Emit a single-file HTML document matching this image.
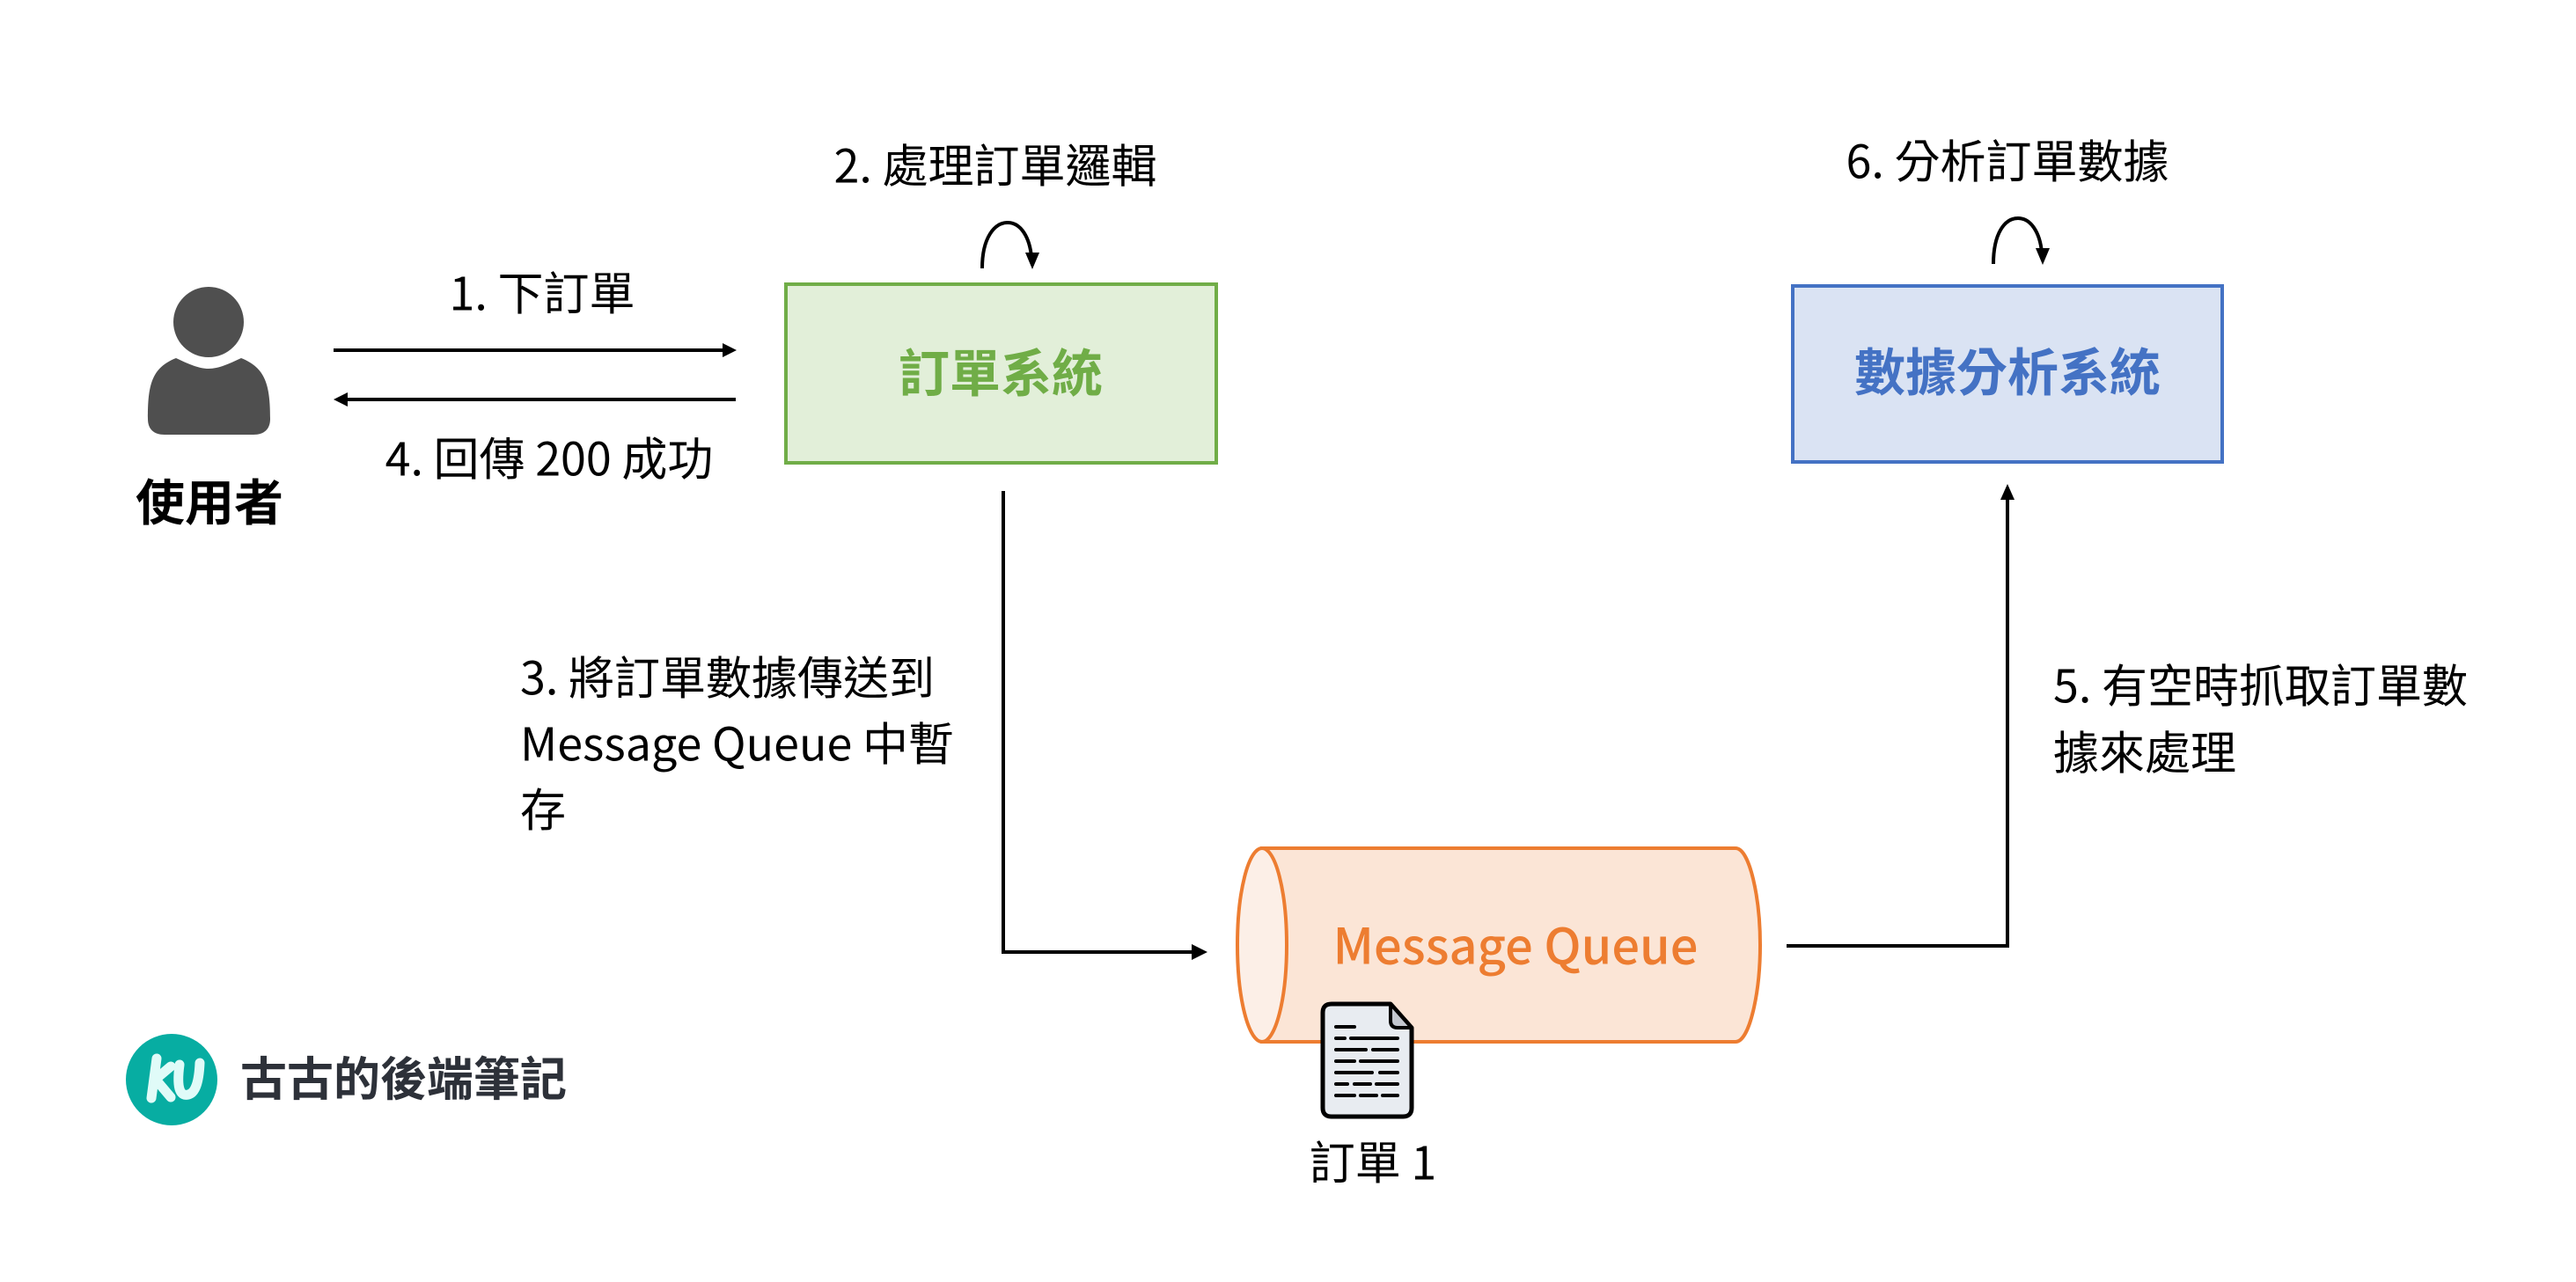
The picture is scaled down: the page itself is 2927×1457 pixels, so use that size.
<!DOCTYPE html>
<html><head><meta charset="utf-8"><style>
html,body{margin:0;padding:0;background:#fff;}
svg{display:block;}
text{font-family:"Liberation Sans","Noto Sans CJK TC",sans-serif;}
.t{font-family:"Noto Sans CJK TC","Liberation Sans",sans-serif;font-size:52px;fill:#000;}
</style></head><body>
<svg width="2927" height="1457" viewBox="0 0 2927 1457" xmlns="http://www.w3.org/2000/svg">
<!-- person -->
<circle cx="237" cy="366" r="40" fill="#4f4f4f"/>
<path d="M168 476 C168 438 172 418 200 407 C215 414 226 419 237 419 C248 419 259 414 274 407 C302 418 307 438 307 476 C307 488 300 494 288 494 L187 494 C175 494 168 488 168 476 Z" fill="#4f4f4f"/>
<text class="t" x="238" y="568" text-anchor="middle" dominant-baseline="central" style="font-weight:bold;font-size:56px">使用者</text>

<!-- arrows 1 / 4 -->
<line x1="379" y1="398" x2="822" y2="398" stroke="#000" stroke-width="4"/>
<polygon points="837,398 821,390 821,406" fill="#000"/>
<line x1="394" y1="454" x2="836" y2="454" stroke="#000" stroke-width="4"/>
<polygon points="379,454 395,446 395,462" fill="#000"/>
<text class="t" x="616" y="330" text-anchor="middle" dominant-baseline="central">1. 下訂單</text>
<text class="t" x="624" y="518" text-anchor="middle" dominant-baseline="central">4. 回傳 200 成功</text>

<!-- green box -->
<rect x="893" y="323" width="489" height="203" fill="#e2efd9" stroke="#70ad47" stroke-width="4"/>
<text class="t" x="1137" y="420" text-anchor="middle" dominant-baseline="central" style="font-weight:bold;font-size:58px;fill:#70ad47">訂單系統</text>
<text class="t" x="1131" y="185" text-anchor="middle" dominant-baseline="central">2. 處理訂單邏輯</text>
<path d="M1116 305 C1116 270 1130 253 1145 253 C1160 253 1170 270 1172 292" fill="none" stroke="#000" stroke-width="4"/>
<polygon points="1173,306 1165,287 1181,287" fill="#000"/>

<!-- blue box -->
<rect x="2037" y="325" width="488" height="200" fill="#dae3f3" stroke="#4472c4" stroke-width="4"/>
<text class="t" x="2281" y="419" text-anchor="middle" dominant-baseline="central" style="font-weight:bold;font-size:58px;fill:#4472c4">數據分析系統</text>
<text class="t" x="2281" y="180" text-anchor="middle" dominant-baseline="central">6. 分析訂單數據</text>
<path d="M2265 300 C2265 265 2278 248 2293 248 C2308 248 2318 265 2320 287" fill="none" stroke="#000" stroke-width="4"/>
<polygon points="2321,301 2313,282 2329,282" fill="#000"/>

<!-- line 3 -->
<polyline points="1140,558 1140,1082 1356,1082" fill="none" stroke="#000" stroke-width="4"/>
<polygon points="1372,1082 1354,1073 1354,1091" fill="#000"/>
<text class="t" x="591" y="767" dominant-baseline="central">3. 將訂單數據傳送到</text>
<text class="t" x="591" y="842" dominant-baseline="central">Message Queue 中暫</text>
<text class="t" x="591" y="917" dominant-baseline="central">存</text>

<!-- line 5 -->
<polyline points="2030,1075 2281,1075 2281,566" fill="none" stroke="#000" stroke-width="4"/>
<polygon points="2281,550 2273,568 2289,568" fill="#000"/>
<text class="t" x="2333" y="776" dominant-baseline="central">5. 有空時抓取訂單數</text>
<text class="t" x="2333" y="852" dominant-baseline="central">據來處理</text>

<!-- cylinder -->
<path d="M1434 964 L1972 964 C1988 964 2000 1020 2000 1074 C2000 1128 1988 1184 1972 1184 L1434 1184 Z" fill="#fbe5d6" stroke="#ed7d31" stroke-width="4"/>
<ellipse cx="1434" cy="1074" rx="28" ry="110" fill="#fcefe7" stroke="#ed7d31" stroke-width="4"/>
<text x="1722" y="1072" text-anchor="middle" dominant-baseline="central" style="font-family:'Noto Sans CJK TC','Liberation Sans',sans-serif;font-size:56px;font-weight:500;fill:#ed7d31">Message Queue</text>

<!-- document -->
<path d="M1513 1141 L1580 1141 L1604 1168 L1604 1259 Q1604 1269 1594 1269 L1513 1269 Q1503 1269 1503 1259 L1503 1151 Q1503 1141 1513 1141 Z" fill="#e8ecf1" stroke="#000" stroke-width="5" stroke-linejoin="round"/>
<path d="M1580 1141 L1580 1160 Q1580 1168 1588 1168 L1604 1168 Z" fill="#c3c7cf" stroke="#000" stroke-width="4" stroke-linejoin="round"/>
<g stroke="#000" stroke-width="4" stroke-linecap="round">
<line x1="1518" y1="1167" x2="1539" y2="1167"/>
<line x1="1518" y1="1180" x2="1528" y2="1180"/><line x1="1535" y1="1180" x2="1588" y2="1180"/>
<line x1="1518" y1="1193" x2="1552" y2="1193"/><line x1="1560" y1="1193" x2="1588" y2="1193"/>
<line x1="1518" y1="1206" x2="1539" y2="1206"/><line x1="1546" y1="1206" x2="1588" y2="1206"/>
<line x1="1518" y1="1219" x2="1559" y2="1219"/><line x1="1568" y1="1219" x2="1588" y2="1219"/>
<line x1="1518" y1="1232" x2="1531" y2="1232"/><line x1="1539" y1="1232" x2="1557" y2="1232"/><line x1="1564" y1="1232" x2="1588" y2="1232"/>
<line x1="1518" y1="1245" x2="1539" y2="1245"/><line x1="1546" y1="1245" x2="1564" y2="1245"/><line x1="1571" y1="1245" x2="1588" y2="1245"/>
</g>
<text class="t" x="1560" y="1318" text-anchor="middle" dominant-baseline="central">訂單 1</text>

<!-- logo -->
<circle cx="195" cy="1227" r="52" fill="#07ada2"/>
<path d="M178 1203 L172 1248 M175 1228 L194 1212 M178 1228 L194 1247 M204 1210 C200 1240 206 1246 214 1244 C222 1242 226 1230 227 1208" fill="none" stroke="#e0fbf8" stroke-width="11" stroke-linecap="round" stroke-linejoin="round"/>
<text x="273" y="1223" dominant-baseline="central" style="font-family:'Noto Sans CJK TC',sans-serif;font-weight:bold;font-size:53px;fill:#2d3139">古古的後端筆記</text>
</svg>
</body></html>
